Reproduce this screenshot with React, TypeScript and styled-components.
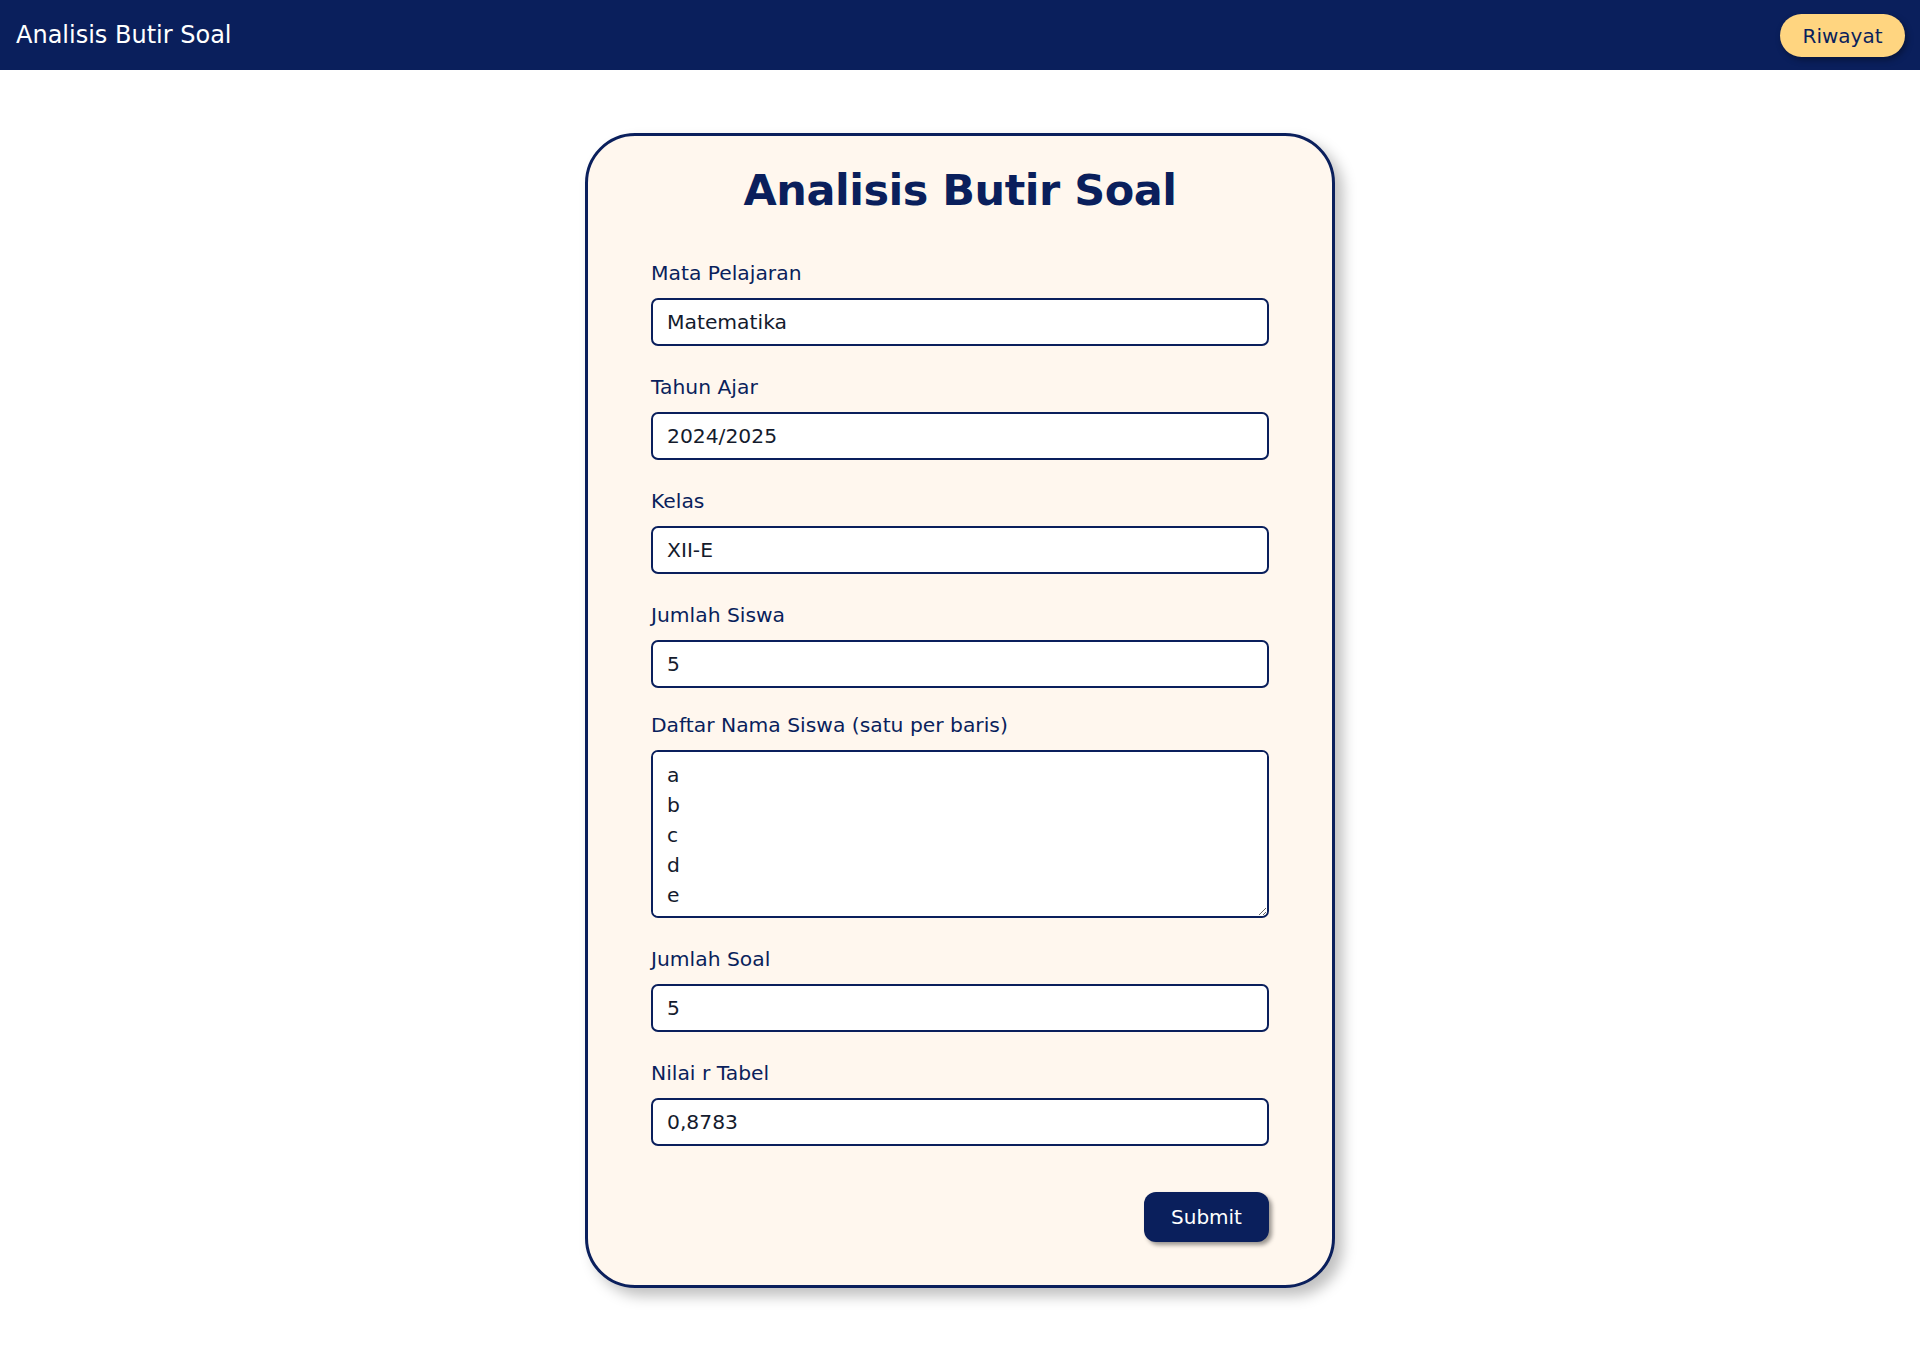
import React, { useState } from "react";
import styled, { createGlobalStyle } from "styled-components";

const navy = "#0A1F5C";

const GlobalStyle = createGlobalStyle`
  html, body {
    margin: 0;
    padding: 0;
    background: #ffffff;
    font-family: "DejaVu Sans", "Noto Sans", sans-serif;
  }
  * { box-sizing: border-box; }
`;

const Page = styled.div`
  min-height: 1350px;
  display: flex;
  flex-direction: column;
`;

const Header = styled.header`
  height: 70px;
  background: ${navy};
  display: flex;
  align-items: center;
  justify-content: space-between;
  padding: 0 15px 0 16px;
`;

const Brand = styled.div`
  color: #ffffff;
  font-size: 24px;
  line-height: 1;
  margin-top: -1px;
`;

const HistoryButton = styled.button`
  width: 125px;
  height: 43px;
  border: none;
  border-radius: 22px;
  background: #ffd580;
  color: ${navy};
  font-family: "DejaVu Sans", sans-serif;
  font-size: 20px;
  box-shadow: 2px 3px 6px rgba(0, 0, 0, 0.35);
  cursor: pointer;
  margin-top: 1px;
`;

const Main = styled.main`
  display: flex;
  justify-content: center;
  padding-top: 63px;
`;

const Card = styled.section`
  width: 750px;
  background: #fff7ee;
  border: 3px solid ${navy};
  border-radius: 50px;
  padding: 25px 63px 43px;
  box-shadow: 8px 8px 14px rgba(0, 0, 0, 0.25);
`;

const Title = styled.h1`
  margin: 0 0 39px;
  text-align: center;
  color: ${navy};
  font-family: "DejaVu Sans", sans-serif;
  font-weight: 700;
  font-size: 43px;
  letter-spacing: -0.5px;
  line-height: 58px;
`;

const Form = styled.form`
  display: flex;
  flex-direction: column;
  gap: 26px;
`;

const Field = styled.div<{ $tight?: boolean }>`
  display: flex;
  flex-direction: column;
  gap: 10px;
  margin-top: ${(p) => (p.$tight ? "-4px" : "0")};
`;

const Label = styled.label`
  color: ${navy};
  font-size: 20.3px;
  line-height: 30px;
`;

const Input = styled.input`
  width: 100%;
  height: 48px;
  border: 2px solid ${navy};
  border-radius: 7px;
  background: #ffffff;
  padding: 0 14px;
  font-family: "DejaVu Sans", sans-serif;
  font-size: 20.3px;
  color: #141b2d;
  outline: none;
`;

const TextArea = styled.textarea`
  width: 100%;
  height: 168px;
  border: 2px solid ${navy};
  border-radius: 7px;
  background: #ffffff;
  padding: 8px 14px 9px;
  font-family: "DejaVu Sans", sans-serif;
  font-size: 20.3px;
  line-height: 30px;
  color: #141b2d;
  outline: none;
  resize: vertical;
  display: block;
`;

const Actions = styled.div`
  display: flex;
  justify-content: flex-end;
  margin-top: 20px;
`;

const SubmitButton = styled.button`
  width: 125px;
  height: 50px;
  border: none;
  border-radius: 12px;
  background: ${navy};
  color: #ffffff;
  font-family: "DejaVu Sans", sans-serif;
  font-size: 20px;
  box-shadow: 3px 3px 4px rgba(0, 0, 0, 0.4);
  cursor: pointer;
`;

export default function App() {
  const [mapel, setMapel] = useState("Matematika");
  const [tahun, setTahun] = useState("2024/2025");
  const [kelas, setKelas] = useState("XII-E");
  const [siswa, setSiswa] = useState("5");
  const [nama, setNama] = useState("a\nb\nc\nd\ne");
  const [soal, setSoal] = useState("5");
  const [rTabel, setRTabel] = useState("0,8783");

  return (
    <Page>
      <GlobalStyle />
      <Header>
        <Brand>Analisis Butir Soal</Brand>
        <HistoryButton type="button">Riwayat</HistoryButton>
      </Header>
      <Main>
        <Card>
          <Title>Analisis Butir Soal</Title>
          <Form onSubmit={(e) => e.preventDefault()}>
            <Field>
              <Label>Mata Pelajaran</Label>
              <Input value={mapel} onChange={(e) => setMapel(e.target.value)} />
            </Field>
            <Field>
              <Label>Tahun Ajar</Label>
              <Input value={tahun} onChange={(e) => setTahun(e.target.value)} />
            </Field>
            <Field>
              <Label>Kelas</Label>
              <Input value={kelas} onChange={(e) => setKelas(e.target.value)} />
            </Field>
            <Field>
              <Label>Jumlah Siswa</Label>
              <Input value={siswa} onChange={(e) => setSiswa(e.target.value)} />
            </Field>
            <Field $tight>
              <Label>Daftar Nama Siswa (satu per baris)</Label>
              <TextArea value={nama} onChange={(e) => setNama(e.target.value)} />
            </Field>
            <Field>
              <Label>Jumlah Soal</Label>
              <Input value={soal} onChange={(e) => setSoal(e.target.value)} />
            </Field>
            <Field>
              <Label>Nilai r Tabel</Label>
              <Input value={rTabel} onChange={(e) => setRTabel(e.target.value)} />
            </Field>
            <Actions>
              <SubmitButton type="submit">Submit</SubmitButton>
            </Actions>
          </Form>
        </Card>
      </Main>
    </Page>
  );
}
